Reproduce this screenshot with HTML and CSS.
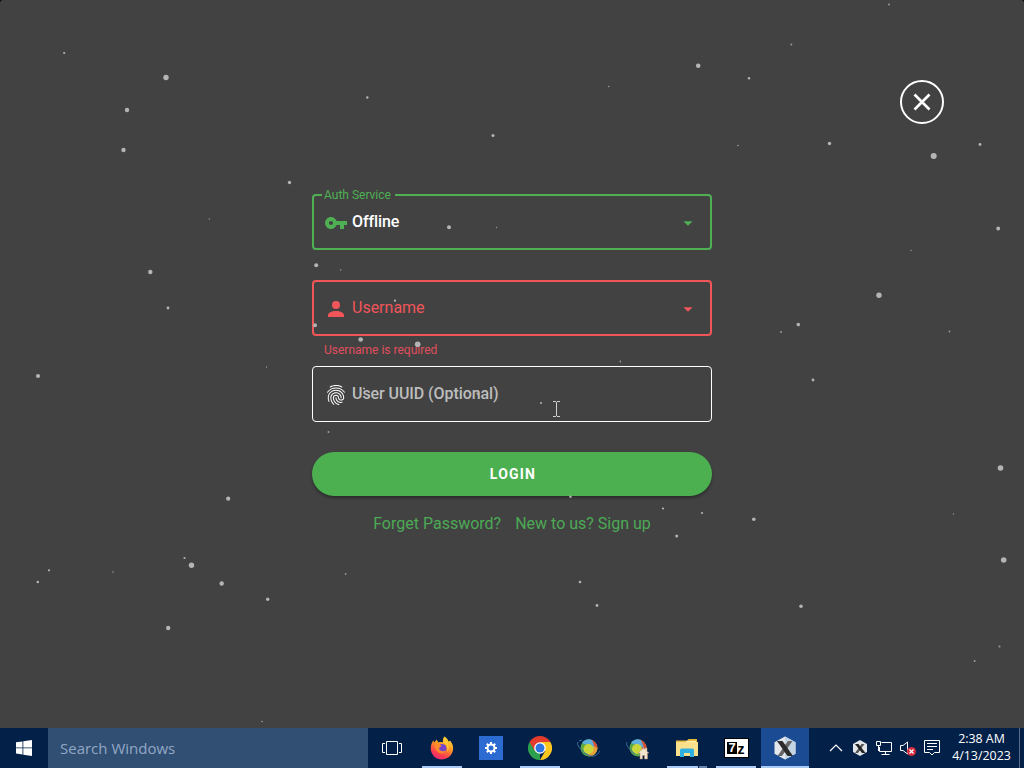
FILE: index.html
```html
<!DOCTYPE html>
<html lang="en">
<head>
    <meta charset="UTF-8">
    <meta name="viewport" content="width=device-width, initial-scale=1.0">
    <title>Login</title>
    <link rel="stylesheet" href="styles.css">
</head>
<body>
    <main class="launcher">
        <button class="close" aria-label="Close">
            <svg width="24" height="24" viewBox="0 0 24 24"><path d="M4.500 4.500l15 15M19.500 4.500l-15 15" stroke="#fff" stroke-width="2.700"/></svg>
        </button>

        <form class="login-form">
            <div class="field service">
                <span class="field-label">Auth Service</span>
                <svg class="icon" viewBox="0 0 24 24"><path d="M7 14C5.9 14 5 13.1 5 12S5.9 10 7 10 9 10.9 9 12 8.1 14 7 14M12.6 10C11.8 7.7 9.6 6 7 6C3.7 6 1 8.7 1 12S3.7 18 7 18C9.6 18 11.8 16.3 12.6 14H16V18H20V14H23V10H12.6Z"/></svg>
                <span class="value">Offline</span>
                <svg class="caret" viewBox="0 0 24 24"><path d="M7 10l5 5 5-5z"/></svg>
            </div>
            <div class="message"></div>

            <div class="field error">
                <svg class="icon" viewBox="0 0 24 24"><path d="M12 4A4 4 0 0 1 16 8A4 4 0 0 1 12 12A4 4 0 0 1 8 8A4 4 0 0 1 12 4M12 14C16.42 14 20 15.79 20 18V20H4V18C4 15.79 7.58 14 12 14Z"/></svg>
                <span class="value">Username</span>
                <svg class="caret" viewBox="0 0 24 24"><path d="M7 10l5 5 5-5z"/></svg>
            </div>
            <div class="message">Username is required</div>

            <div class="field uuid">
                <svg class="icon" viewBox="0 0 24 24"><path d="M17.81,4.47C17.73,4.47 17.65,4.45 17.58,4.41C15.66,3.42 14,3 12,3C10.03,3 8.15,3.47 6.44,4.41C6.2,4.54 5.9,4.45 5.76,4.21C5.63,3.97 5.72,3.66 5.96,3.53C7.82,2.5 9.86,2 12,2C14.14,2 16,2.47 18.04,3.5C18.29,3.65 18.38,3.95 18.25,4.19C18.16,4.37 18,4.47 17.81,4.47M3.5,9.72C3.4,9.72 3.3,9.69 3.21,9.63C3,9.47 2.93,9.16 3.09,8.93C4.08,7.53 5.34,6.43 6.84,5.66C10,4.04 14,4.03 17.15,5.65C18.65,6.42 19.91,7.5 20.9,8.9C21.06,9.12 21,9.44 20.78,9.6C20.55,9.76 20.24,9.71 20.08,9.5C19.18,8.22 18.04,7.23 16.69,6.54C13.82,5.07 10.15,5.07 7.29,6.55C5.93,7.25 4.79,8.25 3.89,9.5C3.81,9.65 3.66,9.72 3.5,9.72M9.75,21.79C9.62,21.79 9.5,21.74 9.4,21.64C8.53,20.77 8.06,20.21 7.39,19C6.7,17.77 6.34,16.27 6.34,14.66C6.34,11.69 8.88,9.27 12,9.27C15.12,9.27 17.66,11.69 17.66,14.66A0.5,0.5 0 0,1 17.16,15.16A0.5,0.5 0 0,1 16.66,14.66C16.66,12.24 14.57,10.27 12,10.27C9.43,10.27 7.34,12.24 7.34,14.66C7.34,16.1 7.66,17.43 8.27,18.5C8.91,19.66 9.35,20.15 10.12,20.93C10.31,21.13 10.31,21.44 10.12,21.64C10,21.74 9.88,21.79 9.75,21.79M16.92,19.94C15.73,19.94 14.68,19.64 13.82,19.05C12.33,18.04 11.44,16.4 11.44,14.66A0.5,0.5 0 0,1 11.94,14.16A0.5,0.5 0 0,1 12.44,14.66C12.44,16.07 13.16,17.4 14.38,18.22C15.09,18.7 15.92,18.93 16.92,18.93C17.16,18.93 17.56,18.9 17.96,18.83C18.23,18.78 18.5,18.96 18.54,19.24C18.59,19.5 18.41,19.77 18.13,19.82C17.56,19.93 17.06,19.94 16.92,19.94M14.91,22C14.87,22 14.82,22 14.78,22C13.19,21.54 12.15,20.95 11.06,19.88C9.66,18.5 8.89,16.64 8.89,14.66C8.89,13.04 10.27,11.72 11.97,11.72C13.67,11.72 15.05,13.04 15.05,14.66C15.05,15.73 16,16.6 17.13,16.6C18.28,16.6 19.21,15.73 19.21,14.66C19.21,10.89 15.96,7.83 11.96,7.83C9.12,7.83 6.5,9.41 5.35,11.86C4.96,12.67 4.76,13.62 4.76,14.66C4.76,15.44 4.83,16.67 5.43,18.27C5.53,18.53 5.4,18.82 5.14,18.91C4.88,19 4.59,18.87 4.5,18.62C4,17.31 3.77,16 3.77,14.66C3.77,13.46 4,12.37 4.45,11.42C5.78,8.63 8.73,6.82 11.96,6.82C16.5,6.82 20.21,10.33 20.21,14.65C20.21,16.27 18.83,17.59 17.13,17.59C15.43,17.59 14.05,16.27 14.05,14.65C14.05,13.58 13.12,12.71 11.97,12.71C10.82,12.71 9.89,13.58 9.89,14.65C9.89,16.36 10.55,17.96 11.76,19.16C12.71,20.1 13.62,20.62 15.03,21C15.3,21.08 15.45,21.36 15.38,21.62C15.33,21.85 15.12,22 14.91,22Z"/></svg>
                <span class="value">User UUID (Optional)</span>
            </div>
            <div class="message"></div>

            <button class="login" type="button">LOGIN</button>
            <div class="links">
                <a>Forget Password?</a>
                <a>New to us? Sign up</a>
            </div>
        </form>

        <!-- falling particles -->
        <svg class="particles" width="1024" height="728" viewBox="0 0 1024 728">
            <g fill="#b4b4b4">
                <circle cx="166" cy="77.5" r="2.7"/><circle cx="127" cy="110" r="2.2"/><circle cx="123.500" cy="150" r="2.2"/>
                <circle cx="289.500" cy="182.500" r="1.7"/><circle cx="150.300" cy="272" r="2.2"/><circle cx="168" cy="308" r="1.4"/>
                <circle cx="493" cy="135.500" r="1.5"/><circle cx="367.300" cy="97.500" r="1.2"/><circle cx="64.200" cy="53" r="1.1"/>
                <circle cx="449" cy="227.300" r="2"/><circle cx="316.200" cy="265.200" r="2"/><circle cx="315" cy="325.300" r="2"/>
                <circle cx="360.700" cy="339.500" r="2.3"/><circle cx="417.700" cy="344.300" r="2.8"/><circle cx="395" cy="300.700" r="1.1"/>
                <circle cx="698.200" cy="65.700" r="2.3"/><circle cx="749" cy="78.300" r="1.2"/><circle cx="829.500" cy="143.500" r="1.7"/>
                <circle cx="933.700" cy="156" r="3"/><circle cx="980" cy="144.500" r="1.4"/><circle cx="998.200" cy="228.500" r="1.9"/>
                <circle cx="879" cy="295.300" r="2.7"/><circle cx="798.300" cy="324.600" r="1.8"/><circle cx="813" cy="380" r="1.4"/>
                <circle cx="38" cy="376" r="2.1"/><circle cx="228.200" cy="498.700" r="2.1"/><circle cx="191.500" cy="565.300" r="2.7"/>
                <circle cx="221.700" cy="583.500" r="2.2"/><circle cx="267.700" cy="599.300" r="1.7"/><circle cx="168.200" cy="628" r="2.2"/>
                <circle cx="37.800" cy="582" r="1.3"/><circle cx="49" cy="570.300" r="1.1"/><circle cx="184.500" cy="558" r="1.1"/>
                <circle cx="1000.500" cy="468" r="2.8"/><circle cx="1003.700" cy="560" r="2.8"/><circle cx="801" cy="606.300" r="1.8"/>
                <circle cx="753.800" cy="519.300" r="1.8"/><circle cx="676.700" cy="536" r="1.5"/><circle cx="663" cy="508.500" r="1.1"/>
                <circle cx="702" cy="513" r="1.1"/><circle cx="597" cy="605.500" r="1.4"/><circle cx="580" cy="582" r="1.3"/>
                <circle cx="541" cy="403" r="1"/><circle cx="570.500" cy="496.700" r="1.2"/><circle cx="477.500" cy="393.700" r="1.1"/>
                <circle cx="364" cy="388.500" r="1"/>
            </g>
            <g fill="#999">
                <circle cx="889" cy="4.500" r="1"/><circle cx="791.300" cy="44.500" r="1"/><circle cx="608.700" cy="86.500" r=".8"/>
                <circle cx="738" cy="145.500" r=".8"/><circle cx="209.300" cy="219" r=".7"/><circle cx="496.500" cy="227.500" r=".7"/>
                <circle cx="340.700" cy="270" r=".8"/><circle cx="911" cy="250.500" r=".7"/><circle cx="781" cy="332" r="1"/>
                <circle cx="949.500" cy="331.500" r=".9"/><circle cx="620.300" cy="361.500" r=".9"/><circle cx="266.500" cy="367" r=".7"/>
                <circle cx="328.500" cy="432" r="1"/><circle cx="113" cy="572" r=".8"/><circle cx="345.600" cy="574" r=".9"/>
                <circle cx="953.500" cy="514" r=".7"/><circle cx="999.500" cy="646.500" r="1"/><circle cx="974.700" cy="661" r="1"/>
                <circle cx="262" cy="721.500" r=".8"/>
            </g>
        </svg>

        <svg class="cursor" width="9" height="17" viewBox="0 0 9 17"><path d="M1 .5H4M5 .5H8M4.500 1V15M1 15.500H4M5 15.500H8" fill="none" stroke="#d0d0d0"/></svg>
    </main>

    <footer class="taskbar">
        <div class="start">
            <svg width="16" height="16" viewBox="0 0 16 16" fill="#fff"><path d="M0 2.300L6.500 1.400V7.500H0zM7.300 1.300L16 0V7.500H7.300zM0 8.300H6.500V14.500L0 13.600zM7.300 8.300H16V16L7.300 14.700z"/></svg>
        </div>
        <div class="search">Search Windows</div>
        <div class="task-view">
            <svg width="20" height="14" viewBox="0 0 20 14" fill="none" stroke="#fff"><path d="M4.500 .5H15.500V13.500H4.500zM3 2.500H.5V11.500H3M17 2.500H19.500V11.500H17"/></svg>
        </div>

        <div class="apps">
            <div class="app running">
                <svg width="24" height="24" viewBox="0 0 24 24">
                    <defs>
                        <linearGradient id="fox" x1=".8" y1="0" x2=".3" y2="1"><stop offset="0" stop-color="#ffe63b"/><stop offset=".45" stop-color="#ff9426"/><stop offset=".8" stop-color="#ff3a50"/><stop offset="1" stop-color="#e52a7a"/></linearGradient>
                    </defs>
                    <path d="M14.500 .5C17 2 18 4 18.500 5.500C19.500 5.500 20 4.500 20 4.500C23 8 24 12 22.500 16A11.300 11.300 0 0 1 1.500 16.500C0 12 1 7.500 3.300 4.500L4.500 6.500L6.500 3.500L8.500 6.500C10 5.800 12 6 13 6.500C12.500 4 13 2 14.500 .5Z" fill="url(#fox)"/>
                    <circle cx="12" cy="12.500" r="4.600" fill="#7544c9"/>
                    <path d="M4.500 9C7 7.500 9 8 11.500 9.500C11 11 9.500 11 9 12C9 15 13 16.500 16 14C14 20 6 18 4.500 9Z" fill="#ff8a2b"/>
                    <path d="M13 6.500C17 8 18 12 17 16C20 12 19 7 15.500 4.500Z" fill="#ffc636"/>
                </svg>
            </div>
            <div class="app">
                <svg width="24" height="24" viewBox="0 0 24 24">
                    <path d="M0 0H24V24H0z" fill="#2c6bd1"/>
                    <g stroke="#fff" fill="none"><circle cx="12" cy="12" r="3.500" stroke-width="2"/><path d="M12 6V8.500M12 15.500V18M6 12H8.500M15.500 12H18M7.800 7.800L9.500 9.500M14.500 14.500L16.200 16.200M16.200 7.800L14.500 9.500M9.500 14.500L7.800 16.200" stroke-width="2"/></g>
                </svg>
            </div>
            <div class="app running">
                <svg width="24" height="24" viewBox="0 0 24 24">
                    <path d="M12 12L12 24A12 12 0 0 1 1.600 6z" fill="#2da04d"/>
                    <path d="M12 6H22.400A12 12 0 0 1 12 24L17.200 15z" fill="#fcc61f"/>
                    <path d="M1.600 6L6.800 15L12 12V6H22.400A12 12 0 0 0 1.600 6z" fill="#e33b2e"/>
                    <circle cx="12" cy="12" r="5.800" fill="#fff"/><circle cx="12" cy="12" r="4.500" fill="#2f74e0"/>
                </svg>
            </div>
            <div class="app">
                <svg width="24" height="24" viewBox="0 0 24 24">
                    <circle cx="12" cy="12" r="8.500" fill="#5aa84a"/>
                    <path d="M12 3.500A8.500 8.500 0 0 1 20.500 12L16 16L12 8z" fill="#d94f38"/><path d="M5 7A8.500 8.500 0 0 1 15 4L18 12L10 9z" fill="#5eaede"/>
                    <path d="M20.500 12A8.500 8.500 0 0 1 12 20.500L10 17L17 10z" fill="#e8a03a"/>
                    <circle cx="11.500" cy="13" r="5" fill="#c9d73d"/>
                    <path d="M1 6C-1 9 4 14 9 18C16 22 20 20 23 15M5 4L2 5" fill="none" stroke="#39719c" stroke-width="1"/>
                </svg>
            </div>
            <div class="app">
                <svg width="24" height="24" viewBox="0 0 24 24">
                    <circle cx="12" cy="12" r="8.500" fill="#5aa84a"/>
                    <path d="M12 3.500A8.500 8.500 0 0 1 20.500 12L16 16L12 8z" fill="#d94f38"/><path d="M5 7A8.500 8.500 0 0 1 15 4L18 12L10 9z" fill="#5eaede"/>
                    <circle cx="11" cy="13" r="5" fill="#c9d73d"/>
                    <path d="M1 6C-1 9 4 14 9 18" fill="none" stroke="#39719c"/>
                    <path d="M12 17L17.500 12L19 13.500V12H21V15.500L23 17H21.500V23H18.500V19.500H16.500V23H14V17z" fill="#f4e5cf" stroke="#b9856a" stroke-width=".5"/>
                </svg>
            </div>
            <div class="app running grouped">
                <svg width="22" height="20" viewBox="0 0 22 20">
                    <path d="M0 2.500H11L12.500 1H21V5H0z" fill="#e9b93c"/><path d="M0 4H22V18H0z" fill="#fbe08b"/><path d="M10 3H20V4H10z" fill="#fff3bd"/>
                    <path d="M4 19V12Q4 10.500 5.500 10.500H16.500Q18 10.500 18 12V19H14V15H8V19z" fill="#2fb0e0"/>
                </svg>
            </div>
            <div class="app running">
                <div class="seven-zip"><b>7</b><i>z</i></div>
            </div>
            <div class="app running active">
                <svg width="24" height="24" viewBox="0 0 24 24">
                    <path d="M12 .5L22.500 6.200V17.800L12 23.500L1.500 17.800V6.200z" fill="#e4e8ec"/><path d="M12 .5L22.500 6.200V17.800L12 23.500z" fill="#c3d4e2"/>
                    <path d="M19.500 5H15L4.500 20H9z" fill="#666"/><path d="M4 5H9.500L20 20H14.500z" fill="#2b2b2b"/>
                </svg>
            </div>
        </div>

        <div class="tray">
            <svg viewBox="0 0 24 24"><path d="M6 15L12 9L18 15" stroke="#fff" stroke-width="1.200" fill="none"/></svg>
            <svg viewBox="0 0 24 24"><path d="M12 4L19 8V16L12 20L5 16V8z" fill="#e2e6ea"/><path d="M16.500 8H13.500L7 17H10z" fill="#555"/><path d="M7 8H10.500L17.500 17H14z" fill="#222"/></svg>
            <svg viewBox="0 0 24 24" fill="none" stroke="#fff"><path d="M9.500 6.500H19.500V15.500H7.500V11M4.500 5.500H8.500V9.500H4.500zM6.500 9.500V15M13.500 15.500V18.500M9.500 18.500H17.500"/></svg>
            <svg viewBox="0 0 24 24"><path d="M4.500 9.500H7L11.500 6V18L7 14.500H4.500z" fill="none" stroke="#fff"/><circle cx="15.500" cy="15.500" r="4.500" fill="#d42a3c"/><path d="M13.500 13.500L17.500 17.500M17.500 13.500L13.500 17.500" stroke="#fff" stroke-width="1.200"/></svg>
            <svg viewBox="0 0 24 24" fill="none" stroke="#fff"><path d="M4.500 4.500H19.500V16.500H14.500L12 19L9.500 16.500H4.500zM7 7.500H17M7 10.500H17M7 13.500H13"/></svg>
        </div>
        <div class="clock">
            <span>2:38 AM</span>
            <span>4/13/2023</span>
        </div>
        <div class="show-desktop"></div>
    </footer>
</body>
</html>
```
FILE: styles.css
```css
* {
    box-sizing: border-box;
}
body {
    margin: 0;
    height: 768px;
    display: flex;
    flex-direction: column;
    background: #000;
    overflow: hidden;
    font-family: Roboto, sans-serif;
}

/* launcher window */
.launcher {
    position: relative;
    height: 728px;
    padding-top: 194px;
    background: #424242;
    border-radius: 3px 3px 0 0;
}
.close {
    position: absolute;
    top: 80px;
    right: 80px;
    width: 44px;
    height: 44px;
    padding: 0;
    display: flex;
    align-items: center;
    justify-content: center;
    background: none;
    border: 2px solid #fff;
    border-radius: 50%;
}
.login-form {
    width: 400px;
    margin: 0 auto;
}
.field {
    position: relative;
    height: 56px;
    display: flex;
    align-items: center;
    padding: 0 11px 0 10px;
    border: 2px solid;
    border-radius: 4px;
}
.field-label {
    position: absolute;
    top: -8px;
    left: 8px;
    padding: 0 4px 0 2px;
    background: #424242;
    font-size: 12px;
    line-height: 14px;
}
.icon {
    width: 24px;
    height: 24px;
    margin-top: 2px;
    fill: currentColor;
}
.value {
    flex: 1;
    margin-left: 4px;
    font-size: 16px;
    line-height: 20px;
    padding-bottom: 1px;
}
.caret {
    width: 22px;
    height: 22px;
    margin-top: 1px;
    fill: currentColor;
}
.service {
    color: #4faf53;
}
.service .value {
    color: #fff;
    font-weight: 500;
    letter-spacing: -0.1px;
}
.error {
    color: #f0555a;
}
.uuid {
    color: #fff;
    border-width: 1px;
    padding-left: 11px;
}
.uuid .value {
    color: #bdbdbd;
    font-weight: 500;
    letter-spacing: -0.07px;
}
.message {
    height: 30px;
    padding: 8px 12px 0;
    color: #e04e5e;
    font-size: 12px;
    line-height: 12px;
}
.login {
    display: block;
    width: 100%;
    height: 44px;
    padding: 0 0 0 2px;
    border: none;
    border-radius: 22px;
    background: #4caf50;
    box-shadow: 0 2px 3px rgba(0, 0, 0, 0.35);
    color: #fff;
    font-family: inherit;
    font-size: 14px;
    font-weight: 700;
    letter-spacing: 1.2px;
}
.links {
    display: flex;
    justify-content: center;
    gap: 14px;
    margin-top: 18px;
    color: #4caa55;
    font-size: 16px;
    line-height: 20px;
}
.particles {
    position: absolute;
    top: 0;
    left: 0;
    pointer-events: none;
}
.cursor {
    position: absolute;
    top: 401px;
    left: 552px;
}

/* windows taskbar */
.taskbar {
    height: 40px;
    display: flex;
    background: #032048;
    color: #fff;
    font-family: "Open Sans", "Noto Sans", sans-serif;
}
.start,
.task-view {
    width: 48px;
    display: flex;
    align-items: center;
    justify-content: center;
}
.search {
    width: 320px;
    padding: 0 12px;
    background: #314e73;
    color: #91a8c5;
    font-size: 15px;
    line-height: 41px;
}
.apps {
    display: flex;
    gap: 1px;
    margin-left: 2px;
}
.app {
    width: 48px;
    display: flex;
    align-items: center;
    justify-content: center;
}
.running {
    background: linear-gradient(#a9cbf5, #a9cbf5) center bottom / 40px 2px no-repeat;
}
.grouped {
    background: linear-gradient(to right, #a9cbf5 31px, #032048 31px, #032048 32px, #6684ad 32px) center bottom / 40px 2px no-repeat;
}
.active {
    background: linear-gradient(#a9cbf5, #a9cbf5) center bottom / 48px 2px no-repeat #1b4c93;
}
.seven-zip {
    width: 23px;
    height: 18px;
    display: flex;
    align-items: center;
    justify-content: center;
    background: #fff;
    outline: 1px solid #000;
    color: #000;
    font-family: "Liberation Sans", sans-serif;
    font-weight: 700;
    line-height: 12px;
}
.seven-zip b {
    width: 10px;
    background: #000;
    color: #fff;
    font-size: 13px;
    text-align: center;
}
.seven-zip i {
    width: 8px;
    padding-top: 2px;
    font-size: 14px;
    font-style: normal;
    text-align: center;
}
.tray {
    display: flex;
    align-items: center;
    margin-left: auto;
}
.tray svg {
    width: 24px;
    height: 24px;
}
.clock {
    width: 75px;
    display: flex;
    flex-direction: column;
    align-items: center;
    padding-top: 2px;
    font-size: 12.4px;
    line-height: 17px;
}
.show-desktop {
    width: 5px;
    border-left: 1px solid #566b8a;
}
```
